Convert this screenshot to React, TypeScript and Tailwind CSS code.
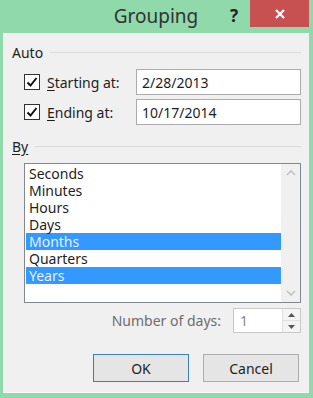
import React from 'react'

const items = ['Seconds', 'Minutes', 'Hours', 'Days', 'Months', 'Quarters', 'Years']
const selected = ['Months', 'Years']

const Check: React.FC = () => (
    <div className="w-[16px] h-[16px] border border-[#333] bg-white flex items-center justify-center">
        <svg width="12" height="12" viewBox="0 0 12 12">
            <path d="M1.5 6.5 L4.5 9.5 L10.5 2" stroke="#111" strokeWidth="2" fill="none" />
        </svg>
    </div>
)

const DateRow: React.FC<{first: string; rest: string; value: string}> = ({first, rest, value}) => (
    <div className="flex items-center h-[26px]">
        <div className="w-[21px]" />
        <Check />
        <span className="ml-[7px] w-[89px] text-[#1e1e1e]">
            <span className="underline underline-offset-2">{first}</span>
            {rest}
        </span>
        <div className="w-[165px] h-[26px] border border-[#acacac] bg-white px-[5px] flex items-center text-[#1e1e1e]">
            {value}
        </div>
    </div>
)

export default function App() {
    return (
        <div
            className="w-[313px] h-[398px] bg-[#8fd9aa] flex flex-col text-[14px] leading-[17px]"
            style={{fontFamily: '"Noto Sans", "Segoe UI", sans-serif'}}
        >
            {/* title bar */}
            <div className="h-[33px] flex items-start">
                <div className="w-[222px] h-[33px] pl-[90px] flex items-center justify-center text-[19px] text-[#333] pb-[1px]">
                    Grouping
                </div>
                <div className="w-[22px] h-[30px] flex items-center justify-center font-bold text-[17px] text-[#222] pl-[2px]">
                    ?
                </div>
                <div className="w-[59px] h-[27px] bg-[#c75050] ml-[6px] flex items-center justify-center">
                    <svg width="12" height="12" viewBox="0 0 12 12">
                        <path d="M2 2 L10 10 M10 2 L2 10" stroke="#fff" strokeWidth="2.2" />
                    </svg>
                </div>
            </div>

            {/* body */}
            <div className="flex-1 ml-[3px] mr-[4px] mb-[5px] bg-[#f0f0f0] border-b border-[#fafafa] flex flex-col">
                <div className="flex items-center mt-[11px] h-[16px] pl-[9px] pr-[8px]">
                    <span className="text-[#1e1e1e]">Auto</span>
                    <div className="flex-1 h-px bg-[#dcdcdc] ml-[7px]" />
                </div>

                <div className="mt-[9px] flex flex-col gap-[4px]">
                    <DateRow first="S" rest="tarting at:" value="2/28/2013" />
                    <DateRow first="E" rest="nding at:" value="10/17/2014" />
                </div>

                <div className="flex items-center mt-[13px] h-[16px] pl-[9px] pr-[8px]">
                    <span className="text-[#1e1e1e] underline underline-offset-2">By</span>
                    <div className="flex-1 h-px bg-[#dcdcdc] ml-[7px]" />
                </div>

                <div className="mt-[9px] ml-[21px] mr-[8px] h-[140px] border border-[#828790] bg-white flex">
                    <div className="flex-1 pt-[1px] pl-[1px]">
                        {items.map((it) =>
                            selected.includes(it) ? (
                                <div
                                    key={it}
                                    className={
                                        it === 'Years'
                                            ? 'h-[17px] bg-[#3399ff] text-[#e6f0ff] pl-[3px] outline outline-1 outline-dotted outline-[#c08040] -outline-offset-1'
                                            : 'h-[17px] bg-[#3399ff] text-[#e6f0ff] pl-[3px]'
                                    }
                                >
                                    {it}
                                </div>
                            ) : (
                                <div key={it} className="h-[17px] text-[#1e1e1e] pl-[3px]">
                                    {it}
                                </div>
                            ),
                        )}
                    </div>
                    <div className="w-[19px] bg-[#f0f0f0] flex flex-col justify-between items-center py-[5px]">
                        <svg width="10" height="7" viewBox="0 0 10 7">
                            <path d="M1 6 L5 2 L9 6" stroke="#c2c2c2" strokeWidth="1.6" fill="none" />
                        </svg>
                        <svg width="10" height="7" viewBox="0 0 10 7">
                            <path d="M1 1 L5 5 L9 1" stroke="#c2c2c2" strokeWidth="1.6" fill="none" />
                        </svg>
                    </div>
                </div>

                <div className="mt-[5px] flex items-center justify-end pr-[8px] h-[25px]">
                    <span className="text-[#6d6d6d] mr-[12px]">Number of days:</span>
                    <div className="w-[68px] h-[25px] border border-[#c8c8c8] bg-white flex">
                        <div className="flex-1 pl-[6px] flex items-center text-[#8a8a8a]">1</div>
                        <div className="w-[18px] bg-[#f4f4f4] border-l border-[#e0e0e0] flex flex-col">
                            <div className="flex-1 flex items-center justify-center border-b border-[#e0e0e0]">
                                <svg width="7" height="4" viewBox="0 0 7 4">
                                    <path d="M0 4 L3.5 0 L7 4 Z" fill="#555" />
                                </svg>
                            </div>
                            <div className="flex-1 flex items-center justify-center">
                                <svg width="7" height="4" viewBox="0 0 7 4">
                                    <path d="M0 0 L3.5 4 L7 0 Z" fill="#555" />
                                </svg>
                            </div>
                        </div>
                    </div>
                </div>

                <div className="mt-[21px] flex justify-end gap-[14px] pr-[10px]">
                    <div className="w-[96px] h-[28px] bg-[#e5e5e5] border border-[#3c7fb1] flex items-center justify-center text-[#1e1e1e]">
                        OK
                    </div>
                    <div className="w-[96px] h-[28px] bg-[#e5e5e5] border border-[#adadad] flex items-center justify-center text-[#1e1e1e]">
                        Cancel
                    </div>
                </div>
            </div>
        </div>
    )
}
